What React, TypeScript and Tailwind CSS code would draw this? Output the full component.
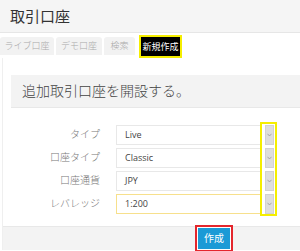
import React from "react";

const font = { fontFamily: '"Open Sans", "Noto Sans CJK JP", sans-serif' };

function Chevron() {
  return (
    <svg width="5" height="4" viewBox="0 0 5 4" className="block">
      <path d="M0.5 0.8 L2.5 3 L4.5 0.8" fill="none" stroke="#999" strokeWidth="0.8" />
    </svg>
  );
}

function Row({ label, value, focus }: { label: string; value: string; focus?: boolean }) {
  return (
    <div className="flex items-center h-[20px]">
      <div className="w-[89px] text-right text-[10px] text-[#777] leading-none -mt-[3px] font-light">{label}</div>
      <div
        className={
          "ml-[16px] w-[146px] h-[20px] flex items-center pl-[8px] text-[9px] text-[#444] bg-white border " +
          (focus ? "border-[#f7e08c]" : "border-[#e8e8e8]")
        }
      >
        {value}
      </div>
      <div className="ml-[3px] w-[9px] h-[20px] bg-[#dedede] border border-[#d2d2d2] flex items-center justify-center">
        <Chevron />
      </div>
    </div>
  );
}

export default function App() {
  return (
    <div className="w-[300px] h-[251px] bg-white overflow-hidden relative" style={font}>
      <div className="h-[33px] bg-[#f5f5f5] border-b border-[#e6e6e6] flex items-center pl-[10px]">
        <span className="text-[15px] text-[#333] leading-none">取引口座</span>
      </div>
      <div className="flex items-start h-[25px] pt-[2px]">
        <div className="mt-[2px] w-[54px] h-[18px] bg-[#f2f2f2] rounded-t-[3px] flex items-center justify-center text-[9px] text-[#aaa] font-light">ライブ口座</div>
        <div className="mt-[2px] ml-[2px] w-[46px] h-[18px] bg-[#f2f2f2] rounded-t-[3px] flex items-center justify-center text-[9px] text-[#aaa] font-light">デモ口座</div>
        <div className="mt-[2px] ml-[2px] w-[31px] h-[18px] bg-[#f2f2f2] rounded-t-[3px] flex items-center justify-center text-[9px] text-[#aaa] font-light">検索</div>
        <div className="ml-[4px] w-[43px] h-[23px] bg-black border-2 border-[#f5ee00] flex items-center justify-center text-[9px] text-white">新規作成</div>
      </div>
      <div className="border-l border-[#efefef] ml-[2px] pt-[17px]">
        <div className="ml-[8px]">
          <div className="h-[33px] bg-[#f3f3f3] border-b border-[#e8e8e8] flex items-center pl-[11px]">
            <span className="text-[14px] text-[#444] leading-none font-light">追加取引口座を開設する。</span>
          </div>
          <div className="pt-[17px] flex flex-col gap-[3px]">
            <Row label="タイプ" value="Live" />
            <Row label="口座タイプ" value="Classic" />
            <Row label="口座通貨" value="JPY" />
            <Row label="レバレッジ" value="1:200" focus />
          </div>
        </div>
        <div className="mt-[12px] h-[24px] bg-[#f3f3f3] border-t border-[#e8e8e8] flex items-start">
          <div className="ml-[192px] -mt-[2px] border-2 border-[#e4262c] p-[1px] bg-white">
            <div className="w-[32px] h-[21px] bg-[#1b9ad6] text-white text-[10px] flex items-center justify-center">作成</div>
          </div>
        </div>
      </div>
      <div className="absolute left-[260px] top-[122px] w-[17px] h-[94px] border-2 border-[#f5ee00] pointer-events-none" />
    </div>
  );
}
